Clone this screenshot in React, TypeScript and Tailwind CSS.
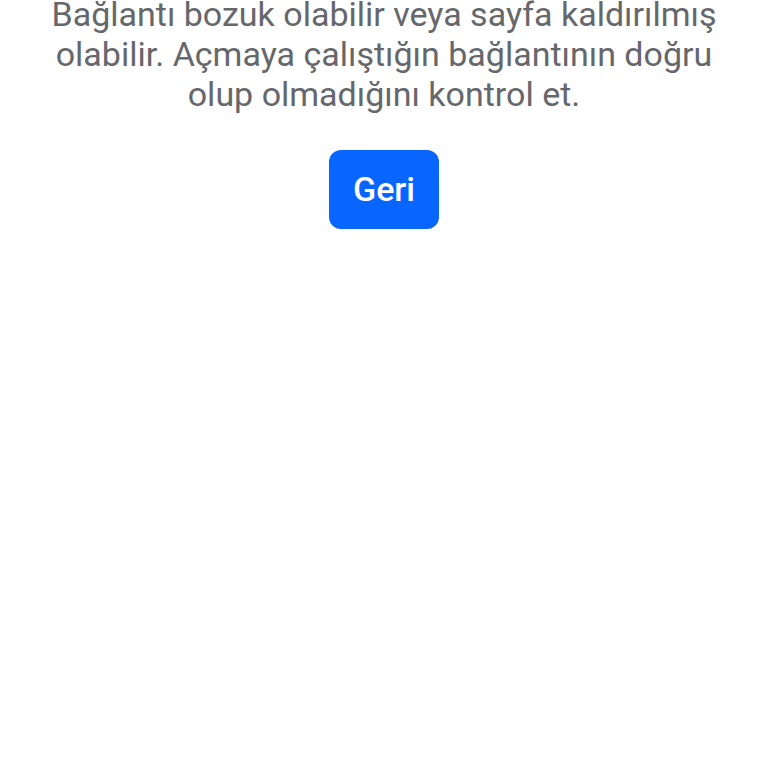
export default function App() {
  return (
    <div
      className="min-h-[768px] w-full bg-white"
      style={{ fontFamily: "Roboto, 'Noto Sans', sans-serif" }}
    >
      <div className="flex flex-col items-center px-6 -mt-[6px]">
        {/* Message */}
        <p className="text-center text-[34px] leading-[40px] text-[#65676b]">
          Bağlantı bozuk olabilir veya sayfa kaldırılmış olabilir. Açmaya
          çalıştığın bağlantının doğru olup olmadığını kontrol et.
        </p>

        {/* Back button */}
        <button className="mt-[36px] flex h-[79px] w-[110px] items-center justify-center rounded-[12px] bg-[#0866ff] text-[34px] font-medium text-white">
          Geri
        </button>
      </div>
    </div>
  );
}
